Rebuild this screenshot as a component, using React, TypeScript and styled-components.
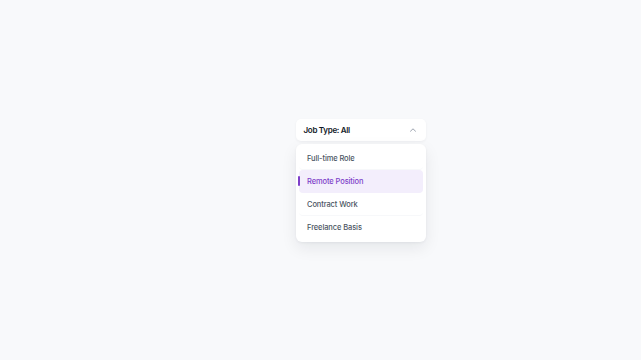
import { useState } from 'react'
import styled, { createGlobalStyle } from 'styled-components'

const options = ['Full-time Role', 'Remote Position', 'Contract Work', 'Freelance Basis']

const App = () => {
	const [active, setActive] = useState(1)
	return (
		<>
			<GlobalStyle />
			<Page>
				<Dropdown>
					<Trigger>
						<span>Job Type: All</span>
						<Chevron viewBox="0 0 10 10">
							<path d="M2.5 6.2 L5 3.8 L7.5 6.2" />
						</Chevron>
					</Trigger>
					<Menu>
						{options.map((label, i) => (
							<Item key={label} $active={i === active} $last={i === options.length - 1} onClick={() => setActive(i)}>
								{label}
							</Item>
						))}
					</Menu>
				</Dropdown>
			</Page>
		</>
	)
}

export default App

const GlobalStyle = createGlobalStyle`
	html, body {
		margin: 0;
		padding: 0;
		background: #f8f9fb;
		font-family: Inter, 'Noto Sans', sans-serif;
	}
`
const Page = styled.div`
	height: 360px;
	display: flex;
	align-items: center;
	padding-left: 296px;
	padding-top: 1px;
	box-sizing: border-box;
`
const Dropdown = styled.div`
	width: 130px;
	display: flex;
	flex-direction: column;
	gap: 3px;
`
const Trigger = styled.div`
	height: 22px;
	display: flex;
	align-items: center;
	justify-content: space-between;
	padding: 0 8px 0 7.5px;
	background: #ffffff;
	border-radius: 5px;
	box-shadow: 0 1px 3px rgba(15, 23, 42, 0.05);
	font-size: 8px;
	font-weight: 600;
	color: #111827;
	letter-spacing: -0.3px;
`
const Chevron = styled.svg`
	width: 10px;
	height: 10px;
	fill: none;
	stroke: #9ca3af;
	stroke-width: 1;
	stroke-linecap: round;
	stroke-linejoin: round;
`
const Menu = styled.div`
	background: #ffffff;
	border-radius: 6px;
	padding: 3px;
	box-shadow: 0 6px 16px rgba(15, 23, 42, 0.08), 0 1px 3px rgba(15, 23, 42, 0.05);
	display: flex;
	flex-direction: column;
`
const Item = styled.div<{ $active: boolean; $last: boolean }>`
	position: relative;
	height: 23px;
	display: flex;
	align-items: center;
	padding-left: 8px;
	border-radius: 4px;
	font-size: 7.5px;
	font-weight: 500;
	letter-spacing: -0.1px;
	cursor: pointer;
	color: ${p => (p.$active ? '#7e3fc9' : '#4b5563')};
	background: ${p => (p.$active ? '#f3eefc' : 'transparent')};
	border-bottom: 1px solid ${p => (p.$last || p.$active ? 'transparent' : '#f7f8fa')};
	box-sizing: border-box;

	&::before {
		content: '';
		display: ${p => (p.$active ? 'block' : 'none')};
		position: absolute;
		left: -1px;
		top: 6px;
		bottom: 6px;
		width: 2px;
		border-radius: 1px;
		background: #7e3fc9;
	}
`
